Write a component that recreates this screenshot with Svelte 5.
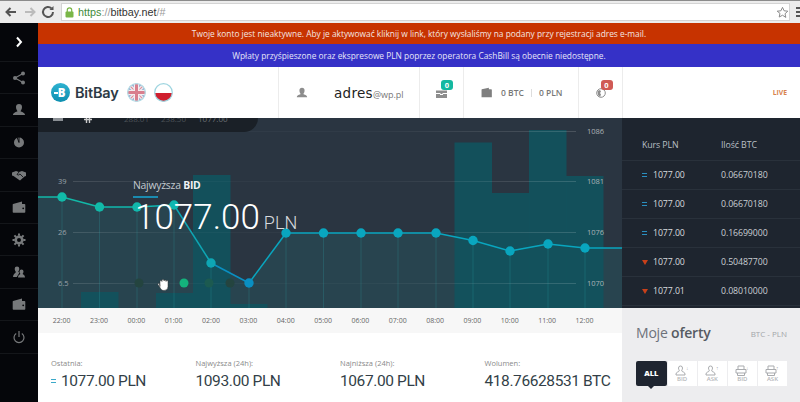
<script>
  // page coordinates from the reference, shifted into the chart box below
  const ox = 38;
  const oy = 118;
  const raw = [
    [62, 197, '#12b9a8'], [99.5, 207, '#12b9a8'], [137, 207, '#11b8ac'], [174, 205, '#10b6b0'],
    [211, 263, '#0ea6b4'], [249, 283, '#0a8fc2'], [286, 233, '#09a6bf'], [323.5, 233, '#09a6bf'],
    [361, 233, '#09a6bf'], [398, 233, '#09a6bf'], [436, 233, '#09a6bf'], [473, 240.5, '#09a6bf'],
    [510, 251, '#09a6bf'], [548, 244, '#09a6bf'], [585, 248, '#09a6bf']
  ];
  const points = raw.map(([x, y, c]) => ({ x: x - ox, y: y - oy, c }));
  const linePts = [`0,${197 - oy}`, ...points.map((p) => `${p.x},${p.y}`), `584,${248 - oy}`].join(' ');
  const areaPts = `0,190 ${linePts} 584,190`;

  // each segment takes the colour of the dot it runs into
  const segments = points.map((p, i) => {
    const prev = i === 0 ? { x: 0, y: 197 - oy } : points[i - 1];
    return { x1: prev.x, y1: prev.y, x2: p.x, y2: p.y, c: p.c };
  });

  const bars = [
    [81, 292], [156, 293], [193, 175], [230, 304],
    [454.5, 142.5], [492, 193], [529, 130], [566, 176]
  ].map(([x, y]) => ({ x: x - ox, y: y - oy, w: 37.5, h: 308 - y }));

  const grid = [131, 181, 232, 283].map((y) => y - oy);
  const leftLabels = [['39', 181], ['26', 232], ['6.5', 283]];
  const rightLabels = [['1086', 131], ['1081', 181], ['1076', 232], ['1070', 283]];
  const dots = [[139, '#24443f'], [184, '#14b27c'], [209, '#1c5a50'], [230, '#24443f']];

  const hours = ['22:00', '23:00', '00:00', '01:00', '02:00', '03:00', '04:00', '05:00', '06:00', '07:00', '08:00', '09:00', '10:00', '11:00', '12:00'];

  const trades = [
    { dir: 'eq', rate: '1077.00', amount: '0.06670180' },
    { dir: 'eq', rate: '1077.00', amount: '0.06670180' },
    { dir: 'eq', rate: '1077.00', amount: '0.16699000' },
    { dir: 'down', rate: '1077.00', amount: '0.50487700' },
    { dir: 'down', rate: '1077.01', amount: '0.08010000' }
  ];

  const stats = [
    { label: 'Ostatnia:', value: '1077.00 PLN', eq: true },
    { label: 'Najwyższa (24h):', value: '1093.00 PLN' },
    { label: 'Najniższa (24h):', value: '1067.00 PLN' },
    { label: 'Wolumen:', value: '418.76628531 BTC' }
  ];

  const side = ['chevron', 'share', 'user', 'pie', 'hands', 'wallet', 'gear', 'users', 'wallet', 'power'];
  const tabs = [
    { label: 'BID', kind: 'user', mark: '↓' },
    { label: 'ASK', kind: 'user', mark: '↑' },
    { label: 'BID', kind: 'box', mark: '↓' },
    { label: 'ASK', kind: 'box', mark: '↑' }
  ];
</script>

<div class="page">
  <div class="browser">
    <svg class="nav" width="52" height="16" viewBox="0 0 52 16">
      <path d="M12 8H3M6.5 4 2.500 8l4 4" fill="none" stroke="#555" stroke-width="2" />
      <path d="M21 8h9M26.500 4l4 4-4 4" fill="none" stroke="#bbb" stroke-width="2" />
      <path d="M49 8a5 5 0 1 1-1.500-3.600" fill="none" stroke="#555" stroke-width="2" />
      <path d="M49.500 2v4h-4z" fill="#555" />
    </svg>
    <div class="url">
      <svg width="9" height="11" viewBox="0 0 9 11">
        <rect x="0.5" y="4.500" width="8" height="6" rx="1" fill="#7ab648" />
        <path d="M2.300 5V3a2.200 2.200 0 0 1 4.400 0v2" fill="none" stroke="#7ab648" stroke-width="1.200" />
      </svg>
      <span class="url-text"><span class="https">https</span><span class="dim">://</span>bitbay.net<span class="dim">/#</span></span>
      <svg class="star" width="13" height="13" viewBox="0 0 24 24">
        <path d="M12 2.500l2.900 6.300 6.900.8-5.100 4.700 1.400 6.800L12 17l-6.100 3.400 1.400-6.800L2.200 9.600l6.900-.8z" fill="#fff" stroke="#888" stroke-width="1.800" />
      </svg>
    </div>
    <div class="burger"><i></i><i></i><i></i></div>
  </div>

  <div class="shell">
    <nav class="sidebar">
      {#each side as icon, i}
        <div class="side-item" class:first={i === 0}>
          <svg width="14" height="14" viewBox="0 0 14 14" fill="#77797b">
            {#if icon === 'chevron'}
              <path d="M5 2.500 9 7l-4 4.500" fill="none" stroke="#fff" stroke-width="2" />
            {:else if icon === 'share'}
              <circle cx="3" cy="7" r="2" /><circle cx="11" cy="2.500" r="2" /><circle cx="11" cy="11.500" r="2" />
              <path d="M11 2.500 3 7l8 4.500" fill="none" stroke="#77797b" stroke-width="1.200" />
            {:else if icon === 'user'}
              <path d="M7 1a3 3 0 0 1 3 3c0 2-1 3.500-1.500 4.300 1 .8 4.500 1.200 4.500 3.700H1c0-2.500 3.500-2.900 4.500-3.700C5 7.500 4 6 4 4a3 3 0 0 1 3-3z" />
            {:else if icon === 'pie'}
              <circle cx="7" cy="7.500" r="5" />
              <path d="M7 7.500V1.500M7 7.500 5 2" fill="none" stroke="#05060a" stroke-width=".9" />
            {:else if icon === 'hands'}
              <path d="M0 4.500 4 3l3 1 3-1 4 1.500V8l-1.500.5L8 12.500 6.500 11.500 1.500 8 0 7.500z" />
              <path d="M7 4 5 6.500l1.500.5L8 6l3 3" fill="none" stroke="#05060a" stroke-width=".8" />
            {:else if icon === 'wallet'}
              <path d="M1 4 10 1.500V4h2.500a.8.800 0 0 1 .8.800V12a.8.800 0 0 1-.8.800h-11A.8.800 0 0 1 .7 12V4.500z" />
              <circle cx="11.200" cy="8.300" r=".9" fill="#05060a" />
            {:else if icon === 'gear'}
              <circle cx="7" cy="7" r="3.300" fill="none" stroke="#77797b" stroke-width="2.600" />
              <path d="M7 .5v13M.5 7h13M2.400 2.400l9.200 9.200M11.600 2.400l-9.200 9.200" stroke="#77797b" stroke-width="2" stroke-dasharray="2.300 8.400" />
            {:else if icon === 'users'}
              <path d="M5 1.500a2.300 2.300 0 0 1 2.300 2.300c0 1.500-.7 2.400-1.100 3 .3.300.8.500 1.300.7L4.800 12H1c0-2.500 2-3.500 3-4.900-.6-.8-1.300-1.700-1.300-3.300A2.300 2.300 0 0 1 5 1.500z" />
              <path d="M9.500 4.500a2 2 0 0 1 2 2c0 1.200-.6 2-.9 2.500.7.500 2.400.9 2.400 3.500H6c0-2.600 1.700-3 2.400-3.500-.3-.5-.9-1.300-.9-2.500a2 2 0 0 1 2-2z" />
            {:else if icon === 'power'}
              <path d="M4.200 3.500a5 5 0 1 0 5.600 0M7 1v6" fill="none" stroke="#77797b" stroke-width="1.200" />
            {/if}
          </svg>
        </div>
      {/each}
    </nav>

    <div class="content">
      <div class="banner red">Twoje konto jest nieaktywne. Aby je aktywować kliknij w link, który wysłaliśmy na podany przy rejestracji adres e-mail.</div>
      <div class="banner blue">Wpłaty przyśpieszone oraz ekspresowe PLN poprzez operatora CashBill są obecnie niedostępne.</div>

      <header class="topbar">
        <div class="cell brand">
          <span class="logo"><span>B</span></span>
          <span class="logo-name">BitBay</span>
          <svg class="flag" width="19" height="19" viewBox="0 0 19 19">
            <clipPath id="flag-uk"><circle cx="9.5" cy="9.5" r="9" /></clipPath>
            <g clip-path="url(#flag-uk)">
              <rect width="19" height="19" fill="#8f9cc9" />
              <path d="M0 0 19 19M19 0 0 19" stroke="#f3eef0" stroke-width="3.5" />
              <path d="M0 0 19 19M19 0 0 19" stroke="#dc8f9c" stroke-width="1.2" />
              <path d="M9.500 0v19M0 9.500h19" stroke="#f3eef0" stroke-width="5.5" />
              <path d="M9.500 0v19M0 9.500h19" stroke="#d97f8e" stroke-width="3" />
            </g>
            <circle cx="9.5" cy="9.5" r="8.8" fill="none" stroke="#b5dde6" stroke-width="1.2" />
          </svg>
          <svg class="flag" width="19" height="19" viewBox="0 0 19 19">
            <clipPath id="flag-pl"><circle cx="9.5" cy="9.5" r="9" /></clipPath>
            <g clip-path="url(#flag-pl)">
              <rect width="19" height="10" fill="#fff" />
              <rect y="10" width="19" height="9" fill="#cf1f2e" />
            </g>
            <circle cx="9.5" cy="9.5" r="8.8" fill="none" stroke="#9fd5e0" stroke-width="1.2" />
          </svg>
        </div>
        <div class="cell account">
          <svg width="12" height="12" viewBox="0 0 14 14" fill="#8d8d8d">
            <path d="M7 1a3 3 0 0 1 3 3c0 2-1 3.500-1.500 4.300 1 .8 4.500 1.200 4.500 3.700H1c0-2.500 3.500-2.900 4.500-3.700C5 7.500 4 6 4 4a3 3 0 0 1 3-3z" />
          </svg>
          <span class="mail"><b>adres</b><small>@wp.pl</small></span>
        </div>
        <div class="cell orders">
          <span class="icon-badge">
            <svg width="11" height="10" viewBox="0 0 11 10" fill="#8d8d8d">
              <path d="M0 2.500h11V5H6.500v1h-2V5H0zM0 6h4v1h3V6h4v4H0z" />
            </svg>
            <em class="badge teal">0</em>
          </span>
        </div>
        <div class="cell balance">
          <svg width="11" height="11" viewBox="0 0 14 14" fill="#7f7f7f">
            <path d="M1 3 10 1v2h3a.8.800 0 0 1 .8.800V13H.7V3.500z" />
          </svg>
          <span>0 BTC</span><i></i><span>0 PLN</span>
        </div>
        <div class="cell alerts">
          <span class="icon-badge">
            <svg width="10" height="10" viewBox="0 0 10 10">
              <circle cx="5" cy="5" r="4.3" fill="#fff" stroke="#8d8d8d" />
              <path d="M1.500 3 4 2l1 1.500L4 5l1 1.500L4 9 2 7z" fill="#8d8d8d" />
            </svg>
            <em class="badge coral">0</em>
          </span>
        </div>
        <div class="cell live">LIVE</div>
      </header>

      <div class="main">
        <div class="left">
          <div class="chart">
            <svg class="plot" width="584" height="190" viewBox="0 0 584 190">
              <defs>
                <linearGradient id="grid-fade">
                  <stop offset="0" stop-color="#fff" stop-opacity="0.13" />
                  <stop offset="0.22" stop-color="#fff" stop-opacity="0.03" />
                  <stop offset="0.6" stop-color="#fff" stop-opacity="0.03" />
                  <stop offset="1" stop-color="#fff" stop-opacity="0.15" />
                </linearGradient>
              </defs>
              <polygon points={areaPts} fill="#1aa0aa" opacity="0.14" />
              {#each bars as b}
                <rect x={b.x} y={b.y} width={b.w} height={b.h} fill="#12525d" opacity="0.95" />
              {/each}
              {#each grid as y}
                <rect x="35" y={y} width="503" height="1" fill="url(#grid-fade)" />
              {/each}
              {#each points as p}
                <line x1={p.x} x2={p.x} y1={p.y} y2="190" stroke="#2fb4bb" stroke-opacity="0.2" />
              {/each}
              {#each segments as s}
                <line x1={s.x1} y1={s.y1} x2={s.x2} y2={s.y2} stroke={s.c} stroke-width="1.5" />
              {/each}
              <line x1={points[14].x} y1={points[14].y} x2="584" y2={248 - oy} stroke="#09a6bf" stroke-width="1.5" />
              {#each points as p}
                <circle cx={p.x} cy={p.y} r="4.7" fill={p.c} />
              {/each}
              {#each dots as d}
                <circle cx={d[0] - ox} cy={283 - oy} r="4.5" fill={d[1]} />
              {/each}
              <path d="M122 168.500v-5a1 1 0 0 1 2 0v-1a1 1 0 0 1 2 0v.500a1 1 0 0 1 2 0v.500a1 1 0 0 1 2 0v5a4 4 0 0 1-4 4c-2 0-3-1-4-3l-2-3c-.500-1 .800-1.500 1.500-.700z" fill="#fff" stroke="#333" stroke-width=".5" />
            </svg>

            {#each leftLabels as l}
              <span class="axis axis-left" style="top:{l[1] - oy - 6}px">{l[0]}</span>
            {/each}
            {#each rightLabels as l}
              <span class="axis axis-right" style="top:{l[1] - oy - 6}px">{l[0]}</span>
            {/each}

            <div class="range">
              <svg width="10" height="3" viewBox="0 0 10 3"><rect width="10" height="3" fill="#8a8f94" /></svg>
              <svg class="range-hash" width="8" height="5" viewBox="0 0 8 5"><path d="M2.500 0v5M5.500 0v5M0 1.500h8" stroke="#ccc" stroke-width="1.400" /></svg>
              <span>288.01</span><span>238.50</span><span class="now">1077.00</span>
            </div>

            <div class="highest">
              <div class="highest-title">Najwyższa <b>BID</b></div>
              <div class="highest-rule"></div>
              <div class="highest-value">1077.00<small>PLN</small></div>
            </div>
          </div>

          <div class="hours">
            {#each hours as h}<span>{h}</span>{/each}
          </div>

          <div class="stats">
            {#each stats as s}
              <div class="stat">
                <div class="stat-label">{s.label}</div>
                <div class="stat-value">{#if s.eq}<i class="eq"></i>{/if}{s.value}</div>
              </div>
            {/each}
          </div>
        </div>

        <aside class="right">
          <div class="trades">
            <div class="trade-head"><span>Kurs PLN</span><span>Ilość BTC</span></div>
            {#each trades as t}
              <div class="trade">
                <span class="rate">
                  <i class={t.dir}></i>{t.rate}
                </span>
                <span>{t.amount}</span>
              </div>
            {/each}
          </div>

          <div class="offers">
            <div class="offers-head">
              <h2>Moje <b>oferty</b></h2>
              <span>BTC - PLN</span>
            </div>
            <div class="tabs">
              <div class="tab all">ALL</div>
              {#each tabs as t}
                <div class="tab">
                  <svg width="15" height="11" viewBox="0 0 15 11" fill="none" stroke="#a9abae" stroke-width="1">
                    {#if t.kind === 'user'}
                      <path d="M5.500 1a2 2 0 0 1 2 2c0 1.500-.8 2-.8 3 0 .6 3.300 1 3.300 3v1H1V9c0-2 3.300-2.400 3.300-3 0-1-.8-1.500-.8-3a2 2 0 0 1 2-2z" />
                    {:else}
                      <path d="M3 4V1h6v3M1 4.500h10V8H1zM2.500 8v2.500h7V8" />
                    {/if}
                    <text x="11" y="5" class="mark">{t.mark}</text>
                  </svg>
                  <span>{t.label}</span>
                </div>
              {/each}
            </div>
          </div>
        </aside>
      </div>
    </div>
  </div>
</div>

<style>
  :global(body) {
    margin: 0;
    background: #fff;
  }

  .page {
    width: 800px;
    height: 402px;
    overflow: hidden;
    display: flex;
    flex-direction: column;
    font-family: "Open Sans", "Liberation Sans", sans-serif;
  }

  .browser {
    height: 23px;
    box-sizing: border-box;
    border-top: 1px solid #8b8b8b;
    background: #ececec;
    display: flex;
    align-items: center;
    padding-left: 4px;
    flex: none;
  }

  .nav {
    margin-right: 5px;
    flex: none;
  }

  .url {
    width: 729px;
    height: 18px;
    box-sizing: border-box;
    background: #fff;
    border: 1px solid #d4d4d4;
    display: flex;
    align-items: center;
    padding-left: 3px;
    gap: 4px;
    flex: none;
  }

  .url-text {
    font-family: "Liberation Sans", sans-serif;
    font-size: 10.8px;
    color: #333;
  }

  .https {
    color: #3f8b3a;
  }

  .dim {
    color: #999;
  }

  .star {
    margin-left: auto;
    margin-right: 0;
  }

  .burger {
    margin-left: 6px;
    display: flex;
    flex-direction: column;
    gap: 2px;
  }

  .burger i {
    width: 5px;
    height: 2px;
    background: #555;
  }

  .shell {
    flex: 1;
    display: flex;
    min-height: 0;
  }

  .sidebar {
    width: 38px;
    flex: none;
    background: #05060a;
  }

  .side-item {
    height: 32.4px;
    display: flex;
    align-items: center;
    justify-content: center;
    border-bottom: 1px solid #14161a;
    box-sizing: border-box;
  }

  .side-item.first {
    height: 39px;
  }

  .content {
    flex: 1;
    display: flex;
    flex-direction: column;
    min-width: 0;
  }

  .banner {
    color: #f4e6e0;
    font-size: 8.35px;
    display: flex;
    align-items: center;
    justify-content: center;
    flex: none;
  }

  .red {
    height: 21px;
    background: #c73300;
  }

  .blue {
    height: 23px;
    background: #3531c7;
    color: #e6e6f8;
  }

  .topbar {
    height: 51px;
    flex: none;
    background: #fff;
    display: flex;
  }

  .cell {
    display: flex;
    align-items: center;
    box-sizing: border-box;
    border-right: 1px solid #ececec;
  }

  .brand {
    width: 241px;
    padding-left: 13px;
  }

  .logo {
    position: relative;
    width: 19px;
    height: 19px;
    border-radius: 50%;
    background: linear-gradient(180deg, #2fb2d0, #0d8fb0);
    color: #fff;
    font-size: 11.5px;
    font-weight: 800;
    display: flex;
    align-items: center;
    justify-content: center;
    padding-left: 2px;
    box-sizing: border-box;
  }

  .logo::before {
    content: "";
    position: absolute;
    left: 3px;
    top: 9px;
    width: 4px;
    height: 1.5px;
    background: #fff;
  }

  .logo-name {
    margin-left: 5px;
    font-family: "Inter", sans-serif;
    font-size: 14.5px;
    font-weight: 600;
    color: #2c3a45;
    width: 44px;
    letter-spacing: -0.2px;
  }

  .flag {
    margin-left: 8px;
  }

  .account {
    width: 141px;
    padding-left: 17px;
  }

  .mail {
    margin-left: 26px;
    font-family: "DejaVu Sans", sans-serif;
    line-height: 1;
  }

  .mail b {
    font-weight: 400;
    font-size: 13.5px;
    letter-spacing: 0.3px;
    color: #222;
  }

  .mail small {
    font-family: "Open Sans", sans-serif;
    font-size: 9px;
    color: #777;
  }

  .orders {
    width: 44px;
    justify-content: center;
  }

  .icon-badge {
    position: relative;
    display: block;
    line-height: 0;
  }

  .badge {
    position: absolute;
    left: 5px;
    top: -8px;
    width: 12px;
    height: 10px;
    border-radius: 3px;
    font-style: normal;
    font-size: 7.5px;
    font-weight: 700;
    line-height: 10px;
    text-align: center;
    color: #fff;
  }

  .teal {
    background: #14b8a0;
  }

  .coral {
    background: #d05a55;
  }

  .balance {
    width: 115px;
    padding-left: 17px;
    font-size: 8.5px;
    font-weight: 600;
    color: #777;
  }

  .balance span:first-of-type {
    margin-left: 9px;
  }

  .balance i {
    width: 1px;
    height: 8px;
    background: #ddd;
    margin: 0 7px;
  }

  .alerts {
    width: 44px;
    justify-content: center;
  }

  .live {
    flex: 1;
    border-right: 0;
    justify-content: flex-end;
    padding-right: 13px;
    font-size: 6.8px;
    font-weight: 700;
    color: #d8834e;
  }

  .main {
    flex: 1;
    display: flex;
    min-height: 0;
  }

  .left {
    width: 584px;
    flex: none;
    display: flex;
    flex-direction: column;
  }

  .chart {
    position: relative;
    height: 190px;
    flex: none;
    overflow: hidden;
    background: #2a3541;
  }

  .plot {
    position: absolute;
    inset: 0;
  }

  .axis {
    position: absolute;
    font-size: 7.5px;
    line-height: 12px;
    color: #9aa3aa;
  }

  .axis-left {
    left: 20px;
  }

  .axis-right {
    left: 549px;
    color: #aab1b6;
  }

  .range {
    position: absolute;
    left: 0;
    top: 0;
    width: 220px;
    height: 14px;
    box-sizing: border-box;
    padding-left: 15px;
    background: #1a2027;
    border-bottom-right-radius: 14px;
    display: flex;
    align-items: flex-start;
    overflow: hidden;
    font-size: 8px;
    line-height: 1;
    color: #4c5258;
  }

  .range svg {
    flex: none;
  }

  .range-hash {
    margin-left: 21px;
    margin-right: 32px;
  }

  .range span {
    width: 37px;
    margin-top: -3px;
  }

  .range .now {
    color: #6c7176;
  }

  .highest {
    position: absolute;
    left: 95px;
    top: 60px;
    color: #fff;
  }

  .highest-title {
    font-size: 10.4px;
    letter-spacing: -0.25px;
    line-height: 14px;
    color: #c4cad0;
  }

  .highest-title b {
    color: #f0f2f4;
  }

  .highest-rule {
    width: 25px;
    height: 2px;
    background: #1a8bb0;
    margin-top: 4px;
  }

  .highest-value {
    font-family: "Roboto", sans-serif;
    font-weight: 300;
    font-size: 35px;
    line-height: 40px;
    margin-left: 2px;
    white-space: nowrap;
  }

  .highest-value small {
    font-size: 18px;
    margin-left: 4px;
    color: #d7dbde;
  }

  .hours {
    height: 25px;
    flex: none;
    box-sizing: border-box;
    padding-left: 5px;
    background: #f7f7f7;
    display: flex;
    align-items: center;
    font-size: 7px;
    color: #666;
  }

  .hours span {
    width: 37.35px;
    text-align: center;
    flex: none;
  }

  .stats {
    flex: 1;
    display: flex;
    background: #fff;
    padding: 24px 0 0 13px;
  }

  .stat {
    width: 144.5px;
    flex: none;
  }

  .stat-label {
    font-size: 7.5px;
    color: #8a8a8a;
    line-height: 12px;
  }

  .stat-value {
    font-family: "Roboto", sans-serif;
    font-size: 15.5px;
    letter-spacing: -0.4px;
    line-height: 22px;
    margin-top: 1px;
    color: #333f48;
    white-space: nowrap;
    display: flex;
    align-items: center;
  }

  .eq {
    width: 5px;
    height: 2px;
    border-top: 1px solid #3ba9c9;
    border-bottom: 1px solid #3ba9c9;
    margin-right: 5px;
  }

  .right {
    flex: 1;
    display: flex;
    flex-direction: column;
    min-width: 0;
  }

  .trades {
    height: 190px;
    flex: none;
    box-sizing: border-box;
    padding-top: 12px;
    background: #1e252f;
    color: #c9ced3;
    font-size: 8.8px;
    letter-spacing: -0.1px;
  }

  .trade-head,
  .trade {
    display: grid;
    grid-template-columns: 79px 1fr;
    padding-left: 20px;
    align-items: center;
    box-sizing: border-box;
    border-bottom: 1px solid #29313b;
  }

  .trade-head {
    height: 31px;
    color: #b9bfc5;
  }

  .trade {
    height: 29px;
  }

  .rate {
    display: flex;
    align-items: center;
    color: #d7dbdf;
  }

  .rate i {
    display: block;
    width: 5px;
    margin-right: 6px;
  }

  .rate .eq {
    height: 2px;
    border-top: 1.5px solid #2a8fc0;
    border-bottom: 1.5px solid #2a8fc0;
  }

  .rate .down {
    width: 0;
    border-left: 3px solid transparent;
    border-right: 3px solid transparent;
    border-top: 5px solid #c8401a;
    margin-right: 5px;
  }

  .offers {
    flex: 1;
    background: #ededef;
    padding: 14px 13px 0 14px;
  }

  .offers-head {
    display: flex;
    align-items: center;
    justify-content: space-between;
  }

  .offers-head h2 {
    margin: 0;
    font-size: 14px;
    letter-spacing: -0.2px;
    line-height: 22px;
    font-weight: 400;
    color: #6d727a;
  }

  .offers-head b {
    font-weight: 600;
    color: #565b63;
  }

  .offers-head span {
    font-size: 8px;
    color: #a3a5a9;
  }

  .tabs {
    display: flex;
    gap: 1px;
    margin-top: 17px;
  }

  .tab {
    position: relative;
    width: 29.5px;
    height: 25px;
    background: #fff;
    display: flex;
    flex-direction: column;
    align-items: center;
    justify-content: center;
    font-size: 6px;
    font-weight: 600;
    line-height: 7px;
    color: #b4b6b9;
  }

  .tab.all {
    width: 31px;
    background: #1f2530;
    color: #fff;
    font-size: 7.5px;
    font-weight: 800;
    border-radius: 2px;
  }

  .tab.all::after {
    content: "";
    position: absolute;
    left: 12px;
    bottom: -3px;
    border-left: 3px solid transparent;
    border-right: 3px solid transparent;
    border-top: 3px solid #1f2530;
  }

  .mark {
    font-size: 5px;
    fill: #a9abae;
    stroke: none;
  }
</style>
